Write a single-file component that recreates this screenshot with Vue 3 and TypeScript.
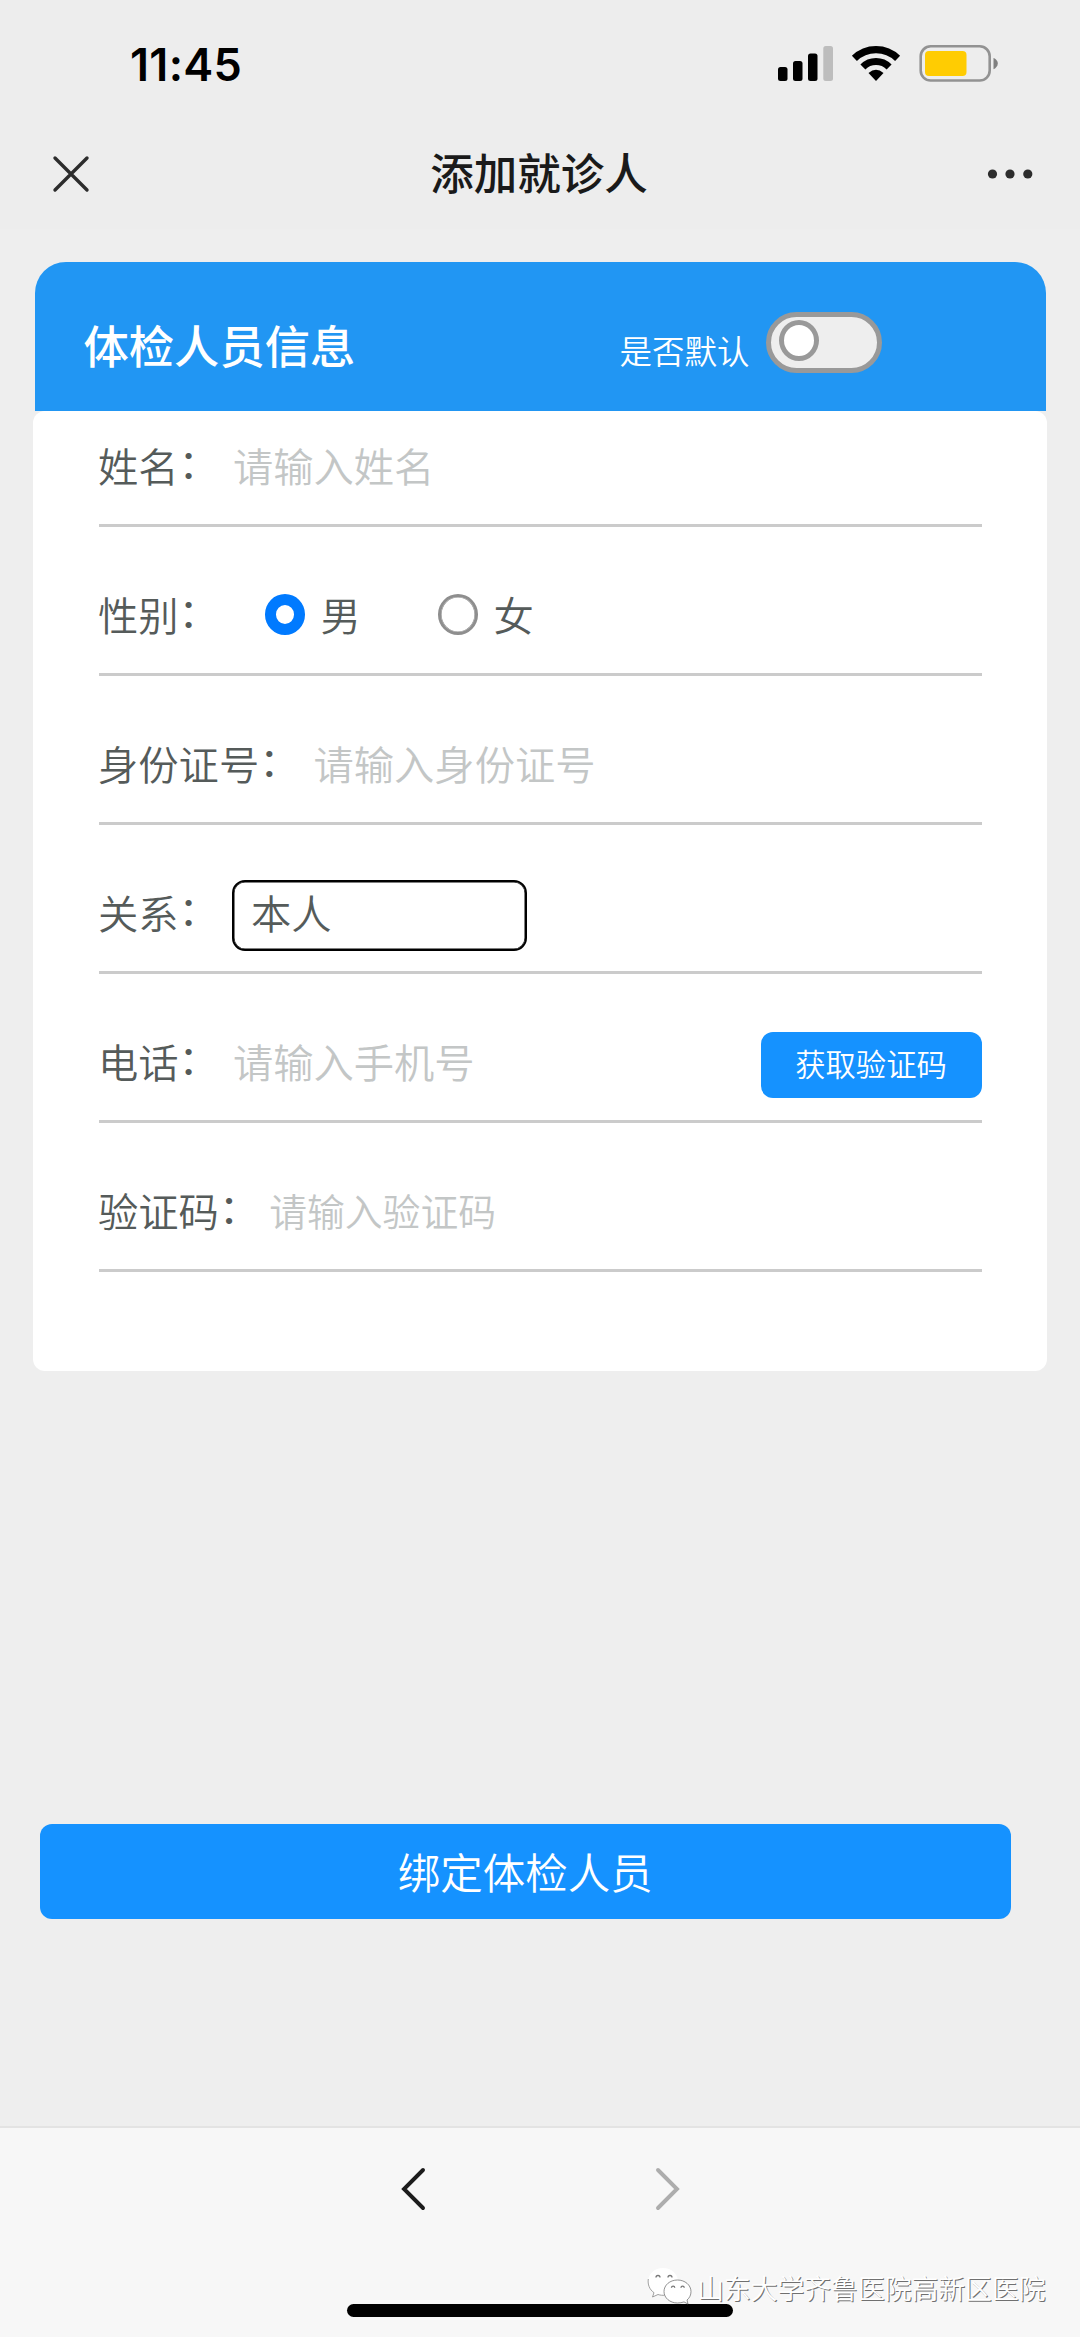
<script setup lang="ts">
import { ref } from 'vue'

interface Gender {
  value: string
  label: string
}

const genders: Gender[] = [
  { value: 'male', label: '男' },
  { value: 'female', label: '女' },
]
const gender = ref('male')
const isDefault = ref(false)
const relation = ref('本人')
</script>

<template>
  <div class="screen">
    <header class="status">
      <span class="time">11:45</span>
      <svg class="status-icons" width="222" height="40" viewBox="0 0 222 40">
        <rect x="0" y="24" width="9.5" height="14" rx="2.5" />
        <rect x="15" y="18" width="9.5" height="20" rx="2.5" />
        <rect x="30" y="10.500" width="9.500" height="27.500" rx="2.500" />
        <rect x="45.300" y="3" width="9.700" height="35" rx="2.500" fill="#bdbdbd" />
        <path d="M76.400 15.300A31 31 0 0 1 119.600 15.300" fill="none" stroke="#000" stroke-width="7.200" />
        <path d="M84.900 24A18.500 18.500 0 0 1 111.100 24" fill="none" stroke="#000" stroke-width="7" />
        <path d="M90.500 30Q98 23.400 105.500 30L98 37.900Z" />
        <rect x="142.700" y="3.300" width="69" height="34.200" rx="10" fill="none" stroke="#929292" stroke-width="2.600" />
        <rect x="147" y="8" width="41.500" height="25" rx="4" fill="#ffcc02" />
        <path d="M215.500 15C217.500 15.500 219.800 17.800 219.800 20.500S217.500 25.500 215.500 26.200Z" fill="#808080" />
      </svg>
    </header>

    <nav class="nav">
      <svg width="40" height="40" viewBox="0 0 40 40">
        <path d="M4 4L36 36M36 4L4 36" stroke="#2c2c2c" stroke-width="3.400" stroke-linecap="round" />
      </svg>
      <h1>添加就诊人</h1>
      <svg width="46" height="12" viewBox="0 0 46 12" fill="#2c2c2c">
        <circle cx="5.500" cy="6" r="4.600" />
        <circle cx="23" cy="6" r="4.600" />
        <circle cx="40.800" cy="6" r="4.600" />
      </svg>
    </nav>

    <main class="content">
      <section class="card-head">
        <h2>体检人员信息</h2>
        <span class="default-label">是否默认</span>
        <button class="switch" :class="{ on: isDefault }" type="button" @click="isDefault = !isDefault">
          <i></i>
        </button>
      </section>

      <section class="card">
        <div class="row">
          <span class="label">姓名<b>：</b></span>
          <span class="hint">请输入姓名</span>
        </div>
        <div class="row">
          <span class="label">性别<b>：</b></span>
          <div class="radios">
            <label v-for="g in genders" :key="g.value" class="radio" @click="gender = g.value">
              <i :class="{ checked: gender === g.value }"></i>
              <span>{{ g.label }}</span>
            </label>
          </div>
        </div>
        <div class="row">
          <span class="label">身份证号<b>：</b></span>
          <span class="hint">请输入身份证号</span>
        </div>
        <div class="row">
          <span class="label">关系<b>：</b></span>
          <div class="select">{{ relation }}</div>
        </div>
        <div class="row">
          <span class="label">电话<b>：</b></span>
          <span class="hint">请输入手机号</span>
          <button class="code" type="button">获取验证码</button>
        </div>
        <div class="row">
          <span class="label">验证码<b>：</b></span>
          <span class="hint small">请输入验证码</span>
        </div>
      </section>

      <button class="submit" type="button">绑定体检人员</button>
    </main>

    <footer class="toolbar">
      <div class="arrows">
        <svg width="30" height="46" viewBox="0 0 30 46">
          <path d="M24 4L5 23L24 42" fill="none" stroke="#1c1c1c" stroke-width="3.900" stroke-linecap="round" />
        </svg>
        <svg width="30" height="46" viewBox="0 0 30 46">
          <path d="M6 4L25 23L6 42" fill="none" stroke="#adadad" stroke-width="3.900" stroke-linecap="round" />
        </svg>
      </div>
      <div class="home-bar"></div>
      <div class="watermark">
        <svg width="46" height="38" viewBox="0 0 46 38">
          <g fill="#fff">
            <path d="M16 1C7.500 1 1 7.200 1 14.800C1 19.500 3.500 23.200 7 25.700L5.500 30L11 27.500C16 29 20 28.500 24 26C29 23 31 19 31 14.500C31 7 24.500 1 16 1Z" />
            <path d="M1.300 12C0.500 17.500 2.500 22.500 7 25.700L5.500 30L11 27.500C13.500 28.300 15.500 28.400 17.500 28.200" fill="none" stroke="#888" stroke-width="0.800" />
            <path d="M30.500 13C22.800 13 17 18.200 17 24.500S22.800 36 30.500 36C33 36 35 35.600 37 34.900L41 37L40 33C42.700 30.800 44 28 44 24.500C44 18.200 38 13 30.500 13Z" stroke="#777" stroke-width="0.800" />
          </g>
          <path d="M9 10.500A2 2 0 0 1 13 10.500M21 10.500A2 2 0 0 1 25 10.500M24.500 20.800A1.600 1.600 0 0 1 27.700 20.800M34 20.800A1.600 1.600 0 0 1 37.200 20.800" fill="none" stroke="#777" stroke-width="1.300" />
        </svg>
        <span>山东大学齐鲁医院高新区医院</span>
      </div>
    </footer>
  </div>
</template>

<style>
html,
body {
  margin: 0;
  background: #eee;
}
</style>

<style scoped>
.screen {
  width: 1080px;
  height: 2337px;
  display: flex;
  flex-direction: column;
  overflow: hidden;
  background: #eee;
  color: #555b5a;
  font-family: 'Noto Sans CJK SC', sans-serif;
}
* {
  box-sizing: border-box;
}
h1,
h2 {
  margin: 0;
  white-space: nowrap;
}
button {
  border: 0;
  padding: 0;
  font-family: inherit;
  white-space: nowrap;
}
svg {
  display: block;
  flex: none;
}
.status {
  flex: none;
  height: 118px;
  padding: 0 80px 0 130px;
  display: flex;
  justify-content: space-between;
  background: #ededed;
}
.time {
  margin-top: 37px;
  font: 600 45px/56px Inter, sans-serif;
  letter-spacing: 0.300px;
  color: #000;
}
.status-icons {
  margin-top: 43px;
}
.nav {
  flex: none;
  height: 111px;
  padding: 0 47px 0 51px;
  display: flex;
  align-items: center;
  justify-content: space-between;
  background: #ededed;
}
.nav h1 {
  margin-top: -4px;
  font-size: 43.500px;
  font-weight: 500;
  line-height: 60px;
  color: #1a1a1a;
}
.content {
  flex: none;
  height: 1897px;
  padding: 33px 33px 0;
  display: flex;
  flex-direction: column;
}
.card-head {
  flex: none;
  height: 149px;
  margin: 0 1.500px;
  padding-left: 49px;
  display: flex;
  align-items: flex-start;
  border-radius: 31px 31px 0 0;
  background: #2196f3;
  color: #fff;
}
.card-head h2 {
  width: 536px;
  margin-top: 49px;
  font-size: 45.300px;
  font-weight: 500;
  line-height: 66px;
}
.default-label {
  width: 146.500px;
  margin-top: 64px;
  font-size: 32.500px;
  font-weight: 350;
  line-height: 48px;
}
.switch {
  width: 116px;
  height: 61px;
  margin-top: 50px;
  padding: 2.500px 8px;
  display: flex;
  border: 5px solid #999;
  border-radius: 31px;
  background: #eee;
}
.switch.on {
  justify-content: flex-end;
}
.switch i {
  width: 40px;
  height: 41px;
  border: 5px solid #999;
  border-radius: 50%;
  background: #fff;
}
.card {
  flex: none;
  height: 959.500px;
  padding: 0 65.500px;
  border-radius: 12px;
  background: #fff;
}
.row {
  height: 116px;
  padding-bottom: 6px;
  display: flex;
  align-items: center;
  border-bottom: 3px solid #cbcbcb;
  font-size: 40.300px;
  font-weight: 350;
  line-height: 60px;
  white-space: nowrap;
}
.row + .row {
  margin-top: 33.100px;
}
.label {
  display: flex;
  margin-left: -0.500px;
}
.label b {
  font-weight: 400;
  line-height: 52px;
}
.hint {
  margin-left: 14px;
  color: #c3c6c6;
}
.hint.small {
  margin-left: 10px;
  font-size: 37.800px;
}
.radios {
  margin-left: 46px;
  display: flex;
  gap: 80px;
}
.radio {
  width: 93px;
  display: flex;
  align-items: center;
  gap: 15px;
}
.radio i {
  flex: none;
  width: 40.500px;
  height: 41px;
  margin-top: 2px;
  border: 3px solid #8e8e8e;
  border-radius: 50%;
  box-shadow: inset 0 0 0 0.600px #8e8e8e;
}
.radio i.checked {
  border: 11.500px solid #007aff;
  box-shadow: none;
}
.select {
  width: 295px;
  height: 71px;
  margin: 7px 0 0 13px;
  padding-left: 17px;
  border: 2px solid #000;
  border-radius: 13px;
  box-shadow: inset 0 0 0 0.500px #000;
  line-height: 60px;
}
.code {
  width: 221px;
  height: 66px;
  margin: 8px 0 0 auto;
  padding-bottom: 4px;
  border-radius: 12px;
  background: #1592ff;
  color: #fff;
  font-size: 30.300px;
  font-weight: 350;
}
.submit {
  flex: none;
  width: 971.500px;
  height: 95px;
  margin: 453.500px 0 0 6.500px;
  padding-bottom: 3px;
  border-radius: 12px;
  background: #1592ff;
  color: #fff;
  font-size: 42.500px;
  font-weight: 350;
}
.toolbar {
  position: relative;
  flex: 1;
  display: flex;
  flex-direction: column;
  align-items: center;
  border-top: 2px solid #e3e3e3;
  background: #f7f7f7;
}
.arrows {
  margin-top: 38px;
  display: flex;
  gap: 223px;
}
.home-bar {
  width: 386px;
  height: 13px;
  margin-top: 92px;
  border-radius: 7px;
  background: #000;
}
.watermark {
  position: absolute;
  right: 34.500px;
  top: 139px;
  display: flex;
  gap: 4px;
  font-size: 26.800px;
  font-weight: 350;
  line-height: 41px;
  color: #fff;
  text-shadow: 1px 1px 0 #707070;
  white-space: nowrap;
}
</style>
